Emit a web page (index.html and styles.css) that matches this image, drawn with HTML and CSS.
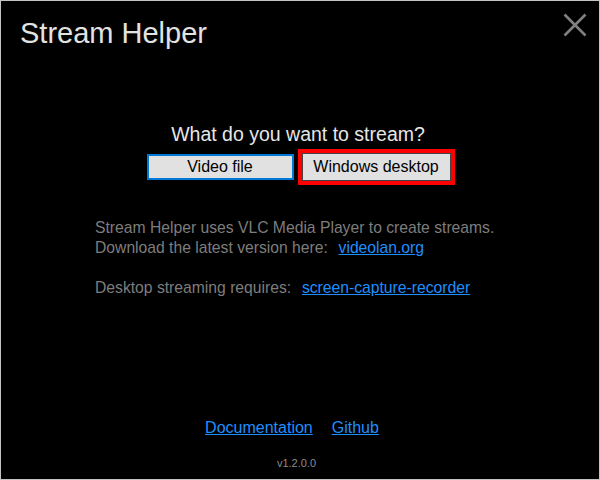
FILE: index.html
```html
<!DOCTYPE html>
<html>
<head>
<meta charset="utf-8">
<link rel="stylesheet" href="styles.css">
</head>
<body>
<div class="window">
  <div class="header">
    <div class="title">Stream Helper</div>
    <div class="close" aria-label="Close">
      <svg width="24" height="24" viewBox="0 0 24 24"><path d="M1.5 1.5 L22.5 22.5 M22.5 1.5 L1.5 22.5" stroke="#808080" stroke-width="2.6" fill="none"/></svg>
    </div>
  </div>
  <div class="question">What do you want to stream?</div>
  <div class="buttons">
    <div class="btn btn-video">Video file</div>
    <div class="highlight"><div class="btn btn-desktop">Windows desktop</div></div>
  </div>
  <div class="info">
    <div class="line">Stream Helper uses VLC Media Player to create streams.</div>
    <div class="line">Download the latest version here:&nbsp; <a href="#" class="link info-link">videolan.org</a></div>
    <div class="line gap">Desktop streaming requires:&nbsp; <a href="#" class="link info-link">screen-capture-recorder</a></div>
  </div>
  <div class="spacer"></div>
  <div class="footer-links">
    <a href="#" class="link">Documentation</a>
    <a href="#" class="link">Github</a>
  </div>
  <div class="version">v1.2.0.0</div>
</div>
</body>
</html>
```
FILE: styles.css
```css
html, body {
  margin: 0;
  padding: 0;
  background: #000;
}
.window {
  width: 600px;
  height: 480px;
  box-sizing: border-box;
  border: 1px solid #c4c4c4;
  background: #000;
  display: flex;
  flex-direction: column;
  font-family: "Liberation Sans", Arial, sans-serif;
}
.header {
  display: flex;
  justify-content: space-between;
  align-items: flex-start;
  padding: 12px 12px 0 19px;
}
.title {
  font-size: 29px;
  color: #e2e2e2;
  line-height: 40px;
}
.close {
  width: 24px;
  height: 24px;
}
.question {
  margin-top: 70px;
  text-align: center;
  font-size: 19.5px;
  color: #e6e6e6;
  line-height: 22px;
  padding-right: 4px;
}
.buttons {
  display: flex;
  justify-content: center;
  align-items: center;
  gap: 4px;
  margin-top: 4px;
  padding-left: 1px;
}
.btn {
  box-sizing: border-box;
  width: 147px;
  height: 26px;
  background: #e1e1e1;
  color: #000;
  font-size: 16px;
  display: flex;
  align-items: center;
  justify-content: center;
}
.btn-video {
  border: 2px solid #0078d7;
}
.highlight {
  background: #ff0000;
  padding: 4px;
}
.btn-desktop {
  width: 149px;
  height: 28px;
  border: 1px solid #444;
}
.info {
  margin-top: 33px;
  padding-left: 94px;
  font-size: 15.7px;
  color: #7d7d7d;
  line-height: 20px;
}
.info-link {
  margin-left: 2px;
}
.gap {
  margin-top: 20px;
}
.link {
  color: #1e8fff;
  text-decoration: underline;
}
.spacer {
  flex: 1;
}
.footer-links {
  display: flex;
  justify-content: center;
  gap: 19px;
  font-size: 16px;
  line-height: 20px;
  padding-right: 16px;
}
.version {
  margin-top: 18px;
  margin-bottom: 9px;
  text-align: center;
  font-size: 11px;
  color: #8c8c8c;
  line-height: 14px;
  padding-right: 7px;
}
```
